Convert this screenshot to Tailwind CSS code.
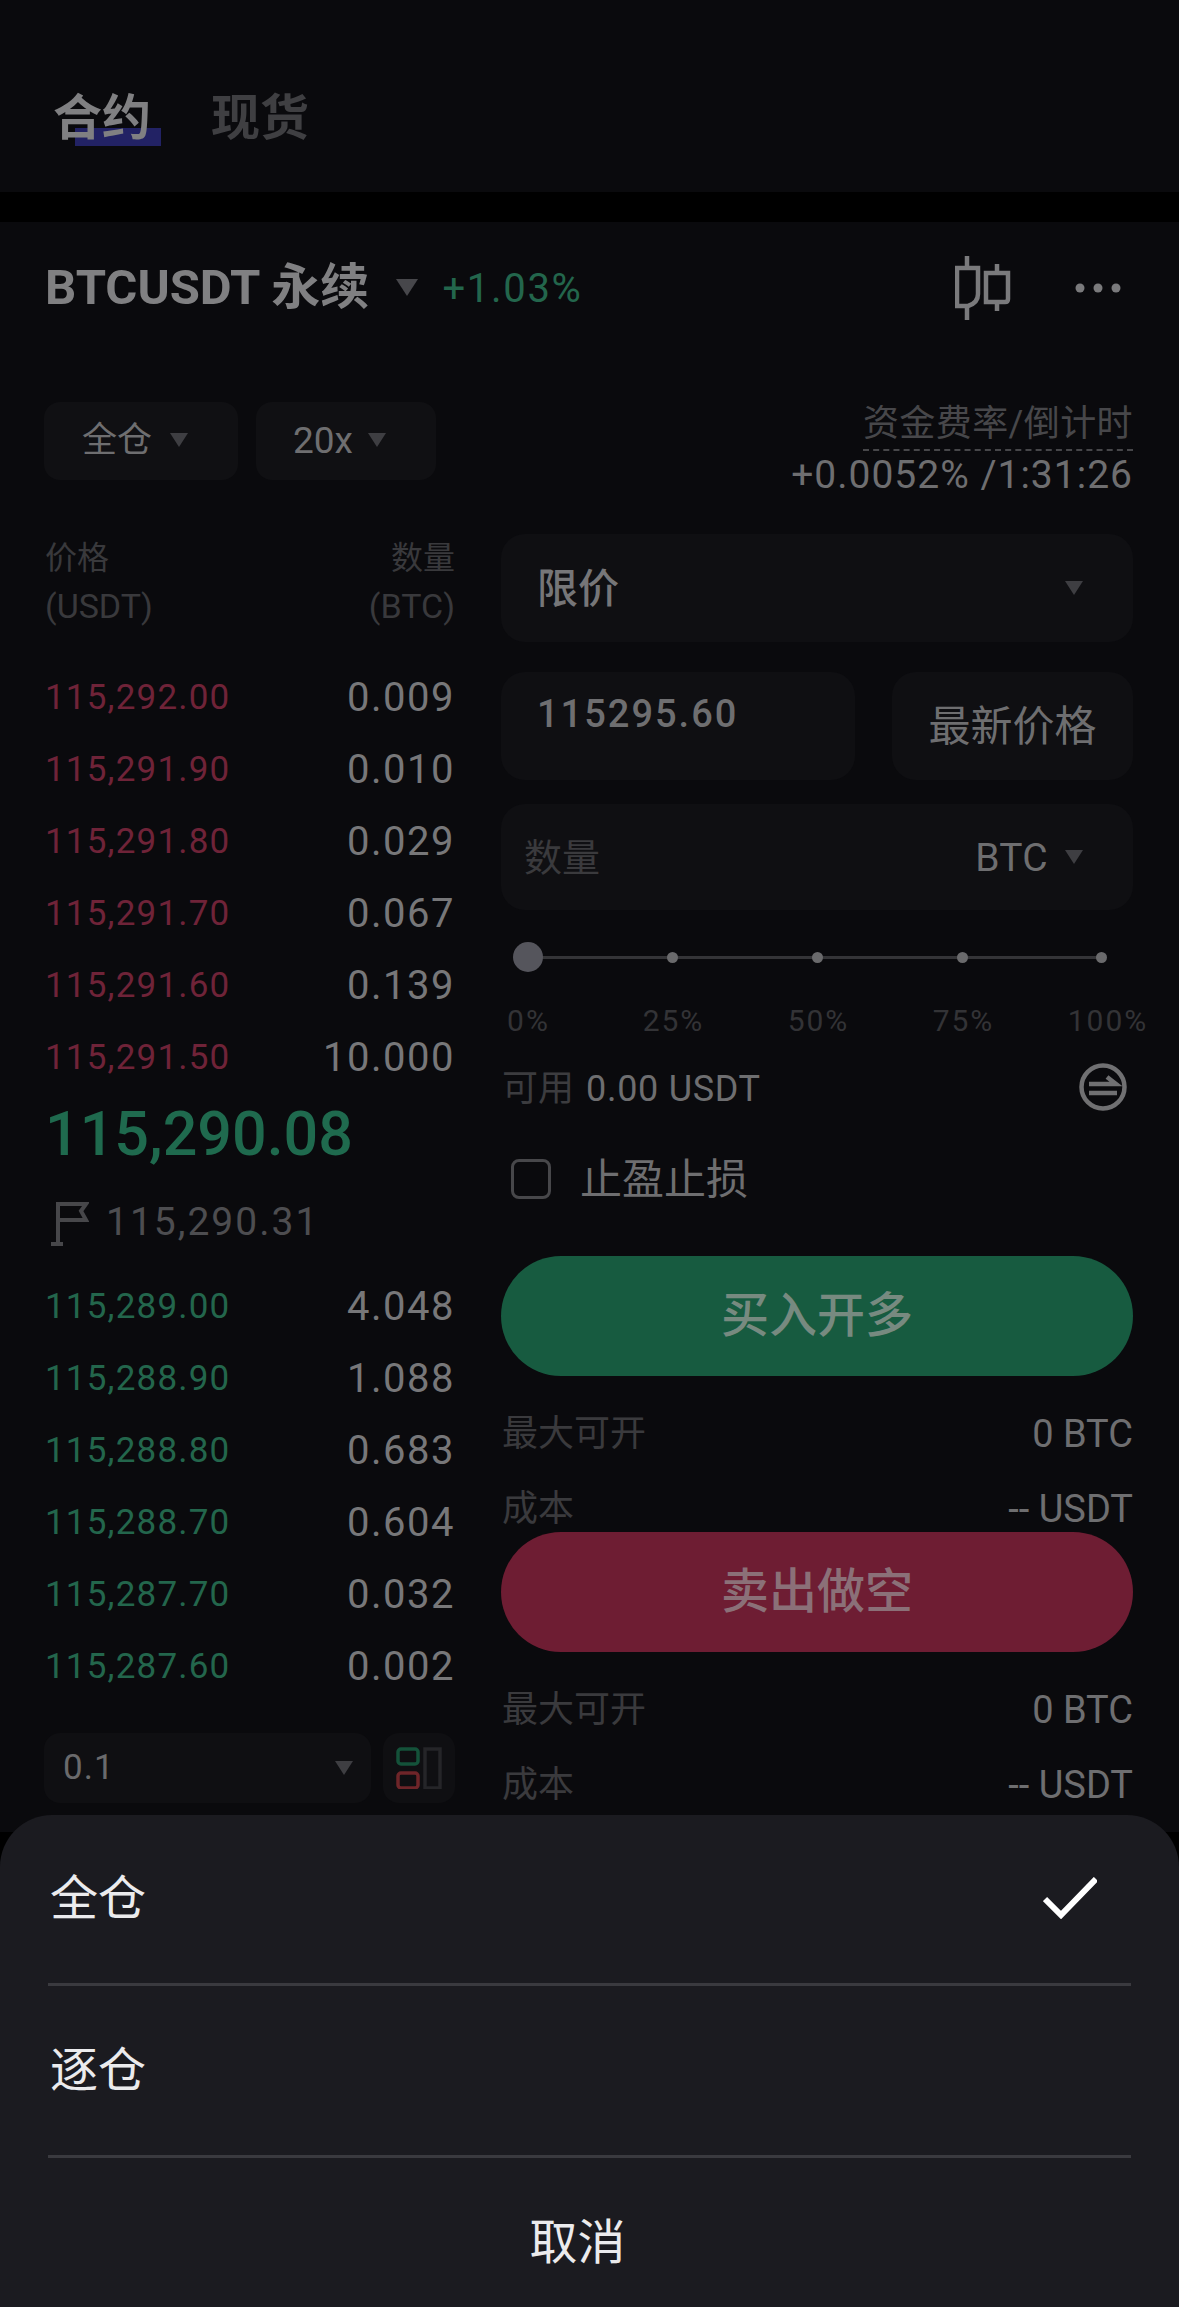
<!DOCTYPE html>
<html lang="zh-CN">
<head>
    <meta charset="UTF-8">
    <meta name="viewport" content="width=device-width, initial-scale=1.0">
    <title>BTCUSDT 永续</title>
    <script src="https://cdn.jsdelivr.net/npm/@tailwindcss/browser@4"></script>
</head>
<body class="bg-black">
<div class="relative w-[1179px] h-[2307px] overflow-hidden bg-black font-['Roboto','Noto_Sans_CJK_SC',sans-serif]">

    <!-- 顶部标签 -->
    <div class="h-[192px] bg-[#0a0a0d] flex items-start gap-[60px] pl-[53px] pt-[89px] text-[49px] leading-[60px] font-bold">
        <div class="relative text-[#808082]">
            <span class="absolute left-[22px] top-[39px] w-[86px] h-[18px] bg-[#25256e]/90"></span>
            <span class="relative">合约</span>
        </div>
        <div class="text-[#3f3f42]">现货</div>
    </div>

    <div class="h-[1610px] mt-[30px] bg-[#0a0a0d]">
        <!-- 交易对 -->
        <div class="h-[132px] flex items-center pl-[45px] pr-[58px]">
            <span class="text-[49px] leading-[60px] font-bold text-[#808082]">BTCUSDT 永续</span>
            <svg class="ml-[27px] mt-[-2px]" width="22" height="17" viewBox="0 0 22 17"><path d="M0 0H22L11 17Z" fill="#47474b"/></svg>
            <span class="ml-[24px] mt-[2px] text-[40px] leading-[50px] tracking-[1.7px] text-[#23664c]">+1.03%</span>
            <svg class="ml-auto" width="58" height="64" viewBox="0 0 58 64" fill="none" stroke="#7a7a7c" stroke-width="4.5">
                <path d="M2 12H23V38Q23 47 13 50H2Z"/>
                <path d="M12 0V12M12 50V64"/>
                <path d="M31 17H53V43Q53 46 50 46H31Z"/>
                <path d="M42 8V17M42 46V55"/>
            </svg>
            <svg class="ml-[62px]" width="46" height="10" viewBox="0 0 46 10" fill="#7a7a7c"><circle cx="5" cy="5" r="4.5"/><circle cx="23" cy="5" r="4.5"/><circle cx="41" cy="5" r="4.5"/></svg>
        </div>

        <!-- 仓位 / 资金费率 -->
        <div class="h-[180px] flex items-start pt-[48px] pl-[44px] pr-[46px]">
            <div class="w-[194px] h-[78px] rounded-[16px] bg-[#101013] flex items-center pl-[38px] text-[35px] text-[#6e6e70]">
                全仓
                <svg class="ml-[18px] mt-[-2px]" width="18" height="14" viewBox="0 0 18 14"><path d="M0 0H18L9 14Z" fill="#3e3e42"/></svg>
            </div>
            <div class="ml-[18px] w-[180px] h-[78px] rounded-[16px] bg-[#101013] flex items-center pl-[37px] text-[37px] text-[#6e6e70]">
                20x
                <svg class="ml-[15px] mt-[-2px]" width="18" height="14" viewBox="0 0 18 14"><path d="M0 0H18L9 14Z" fill="#3e3e42"/></svg>
            </div>
            <div class="ml-auto flex flex-col items-end">
                <div class="mt-[2px] text-[36px] leading-[40px] pb-[5px] tracking-[0.4px] text-[#47474a] border-b-2 border-dashed border-[#47474a]">资金费率/倒计时</div>
                <div class="text-[39px] leading-[44px] mt-[2px] tracking-[1px] text-[#6e6e70]">+0.0052% /1:31:26</div>
            </div>
        </div>

        <div class="flex pl-[45px] pr-[46px]">
            <!-- 盘口 -->
            <div class="w-[410px]">
                <div class="flex justify-between text-[32px] leading-[48px] text-[#39393c]">
                    <div>价格<br><span class="text-[34px]">(USDT)</span></div>
                    <div class="text-right">数量<br><span class="text-[34px]">(BTC)</span></div>
                </div>
                <div class="mt-[31px] text-[35px] leading-[72px] tracking-[1.2px] text-[#6f2338]">
                    <div class="flex justify-between h-[72px]"><span>115,292.00</span><span class="text-[40px] tracking-[1.5px] text-[#777779]">0.009</span></div>
                    <div class="flex justify-between h-[72px]"><span>115,291.90</span><span class="text-[40px] tracking-[1.5px] text-[#777779]">0.010</span></div>
                    <div class="flex justify-between h-[72px]"><span>115,291.80</span><span class="text-[40px] tracking-[1.5px] text-[#777779]">0.029</span></div>
                    <div class="flex justify-between h-[72px]"><span>115,291.70</span><span class="text-[40px] tracking-[1.5px] text-[#777779]">0.067</span></div>
                    <div class="flex justify-between h-[72px]"><span>115,291.60</span><span class="text-[40px] tracking-[1.5px] text-[#777779]">0.139</span></div>
                    <div class="flex justify-between h-[72px]"><span>115,291.50</span><span class="text-[40px] tracking-[1.5px] text-[#777779]">10.000</span></div>
                </div>
                <div class="h-[80px] text-[61px] leading-[80px] font-medium text-[#1f6a4e]">115,290.08</div>
                <div class="h-[97px] flex items-center pl-[6px]">
                    <svg width="38" height="46" viewBox="0 0 38 46" fill="none" stroke="#47474a" stroke-width="4">
                        <path d="M7 2V44M0 44H12"/>
                        <path d="M7 4H35L30 11L35 20H7"/>
                    </svg>
                    <span class="ml-[17px] text-[39px] tracking-[2px] text-[#4d4d50]">115,290.31</span>
                </div>
                <div class="text-[35px] leading-[72px] tracking-[1.2px] text-[#23664c]">
                    <div class="flex justify-between h-[72px]"><span>115,289.00</span><span class="text-[40px] tracking-[1.5px] text-[#777779]">4.048</span></div>
                    <div class="flex justify-between h-[72px]"><span>115,288.90</span><span class="text-[40px] tracking-[1.5px] text-[#777779]">1.088</span></div>
                    <div class="flex justify-between h-[72px]"><span>115,288.80</span><span class="text-[40px] tracking-[1.5px] text-[#777779]">0.683</span></div>
                    <div class="flex justify-between h-[72px]"><span>115,288.70</span><span class="text-[40px] tracking-[1.5px] text-[#777779]">0.604</span></div>
                    <div class="flex justify-between h-[72px]"><span>115,287.70</span><span class="text-[40px] tracking-[1.5px] text-[#777779]">0.032</span></div>
                    <div class="flex justify-between h-[72px]"><span>115,287.60</span><span class="text-[40px] tracking-[1.5px] text-[#777779]">0.002</span></div>
                </div>
                <div class="mt-[30px] -ml-[1px] flex gap-[12px]">
                    <div class="w-[328px] h-[70px] rounded-[16px] bg-[#0f0f12] flex items-center justify-between pl-[19px] pr-[18px] text-[35px] tracking-[1px] text-[#6a6a6c]">
                        0.1
                        <svg width="18" height="14" viewBox="0 0 18 14"><path d="M0 0H18L9 14Z" fill="#3e3e42"/></svg>
                    </div>
                    <div class="w-[72px] h-[70px] rounded-[16px] bg-[#0f0f12] flex items-center justify-center">
                        <svg width="46" height="42" viewBox="0 0 46 42" fill="none" stroke-width="3.5">
                            <rect x="2" y="2" width="20" height="15" rx="3" stroke="#14523a"/>
                            <rect x="2" y="26" width="20" height="15" rx="3" stroke="#6e2529"/>
                            <rect x="29" y="2" width="15" height="39" stroke="#252528"/>
                        </svg>
                    </div>
                </div>
            </div>

            <!-- 下单 -->
            <div class="ml-[46px] w-[632px]">
                <div class="h-[108px] rounded-[24px] bg-[#0f0f12] flex items-center justify-between pl-[36px] pr-[50px] text-[41px] font-medium text-[#767678]">
                    <span class="mt-[4px]">限价</span>
                    <svg width="18" height="14" viewBox="0 0 18 14"><path d="M0 0H18L9 14Z" fill="#3e3e42"/></svg>
                </div>
                <div class="mt-[30px] flex justify-between">
                    <div class="w-[354px] h-[108px] rounded-[24px] bg-[#0f0f12] pl-[36px] pt-[17px] text-[38px] leading-[50px] font-medium tracking-[2px] text-[#6e6e70]">115295.60</div>
                    <div class="w-[241px] h-[108px] rounded-[24px] bg-[#0f0f12] flex items-center justify-center text-[42px] text-[#6e6e70]">最新价格</div>
                </div>
                <div class="mt-[24px] h-[106px] rounded-[24px] bg-[#0f0f12] flex items-center pl-[23px] pr-[50px] text-[38px] text-[#3a3a3d]">
                    <span class="mt-[2px]">数量</span>
                    <span class="ml-auto mt-[2px] text-[39px] tracking-[0.3px] text-[#6e6e70]">BTC</span>
                    <svg class="ml-[17px]" width="18" height="14" viewBox="0 0 18 14"><path d="M0 0H18L9 14Z" fill="#3e3e42"/></svg>
                </div>
                <!-- 滑块 -->
                <div class="relative mt-[32px] h-[30px] flex items-center pl-[12px]">
                    <div class="absolute left-[27px] w-[573px] h-[3px] bg-[#343437]"></div>
                    <span class="relative w-[30px] h-[30px] rounded-full bg-[#55555c]"></span>
                    <span class="relative ml-[124px] w-[11px] h-[11px] rounded-full bg-[#6a6a6c]"></span>
                    <span class="relative ml-[134px] w-[11px] h-[11px] rounded-full bg-[#6a6a6c]"></span>
                    <span class="relative ml-[134px] w-[11px] h-[11px] rounded-full bg-[#6a6a6c]"></span>
                    <span class="relative ml-[128px] w-[11px] h-[11px] rounded-full bg-[#6a6a6c]"></span>
                </div>
                <div class="-ml-[45px] mt-[29px] flex text-[30px] leading-[40px] tracking-[2px] text-[#333336]">
                    <span class="w-[145px] shrink-0 text-center">0%</span>
                    <span class="w-[145px] shrink-0 text-center">25%</span>
                    <span class="w-[145px] shrink-0 text-center">50%</span>
                    <span class="w-[145px] shrink-0 text-center">75%</span>
                    <span class="w-[144px] shrink-0 text-center whitespace-nowrap">100%</span>
                </div>
                <div class="mt-[24px] h-[48px] flex items-center pl-[1px] pr-[6px]">
                    <span class="text-[36px] text-[#3c3c3f]">可用</span>
                    <span class="ml-[12px] text-[36px] tracking-[0.7px] text-[#6e6e70]">0.00 USDT</span>
                    <svg class="ml-auto -translate-y-[2px]" width="48" height="48" viewBox="0 0 48 48" fill="none" stroke="#707072" stroke-width="4.5">
                        <circle cx="24" cy="24" r="21.5"/>
                        <path d="M10 21H37L28 14"/>
                        <path d="M10 30H38"/>
                    </svg>
                </div>
                <div class="mt-[38px] h-[56px] flex items-center pl-[10px]">
                    <span class="w-[40px] h-[40px] rounded-[8px] border-[3px] border-[#47474a]"></span>
                    <span class="ml-[29px] text-[42px] text-[#6e6e70]">止盈止损</span>
                </div>
                <div class="mt-[49px] h-[120px] rounded-full bg-[#175b40] flex items-center justify-center text-[48px] font-medium text-[#778a80]">买入开多</div>
                <div class="mt-[38px] h-[40px] flex items-center justify-between pl-[1px] text-[36px] text-[#3a3a3d]">
                    <span>最大可开</span><span class="text-[38px] text-[#6e6e70]">0 BTC</span>
                </div>
                <div class="mt-[35px] h-[40px] flex items-center justify-between pl-[1px] text-[36px] text-[#3a3a3d]">
                    <span>成本</span><span class="text-[38px] text-[#6e6e70]">-- USDT</span>
                </div>
                <div class="mt-[3px] h-[120px] rounded-full bg-[#6e1d33] flex items-center justify-center text-[48px] font-medium text-[#8b7078]">卖出做空</div>
                <div class="mt-[38px] h-[40px] flex items-center justify-between pl-[1px] text-[36px] text-[#3a3a3d]">
                    <span>最大可开</span><span class="text-[38px] text-[#6e6e70]">0 BTC</span>
                </div>
                <div class="mt-[35px] h-[40px] flex items-center justify-between pl-[1px] text-[36px] text-[#3a3a3d]">
                    <span>成本</span><span class="text-[38px] text-[#6e6e70]">-- USDT</span>
                </div>
            </div>
        </div>
    </div>

    <!-- 底部弹层 -->
    <div class="absolute left-0 right-0 top-[1815px] bottom-0 rounded-t-[52px] bg-[#1b1b20] text-[48px] text-[#ebebed]">
        <div class="h-[171px] mx-[48px] pl-[2px] pr-[34px] flex items-center justify-between border-b-[3px] border-[#3a3a3f]">
            <span>全仓</span>
            <svg class="mt-[-3px]" width="54" height="42" viewBox="0 0 54 42" fill="none" stroke="#ffffff" stroke-width="6"><path d="M2 22L18 38L53 2"/></svg>
        </div>
        <div class="h-[172px] mx-[48px] pl-[2px] flex items-center border-b-[3px] border-[#3a3a3f]">逐仓</div>
        <div class="h-[149px] pt-[20px] flex items-center justify-center pr-[24px]">取消</div>
    </div>
</div>
</body>
</html>
